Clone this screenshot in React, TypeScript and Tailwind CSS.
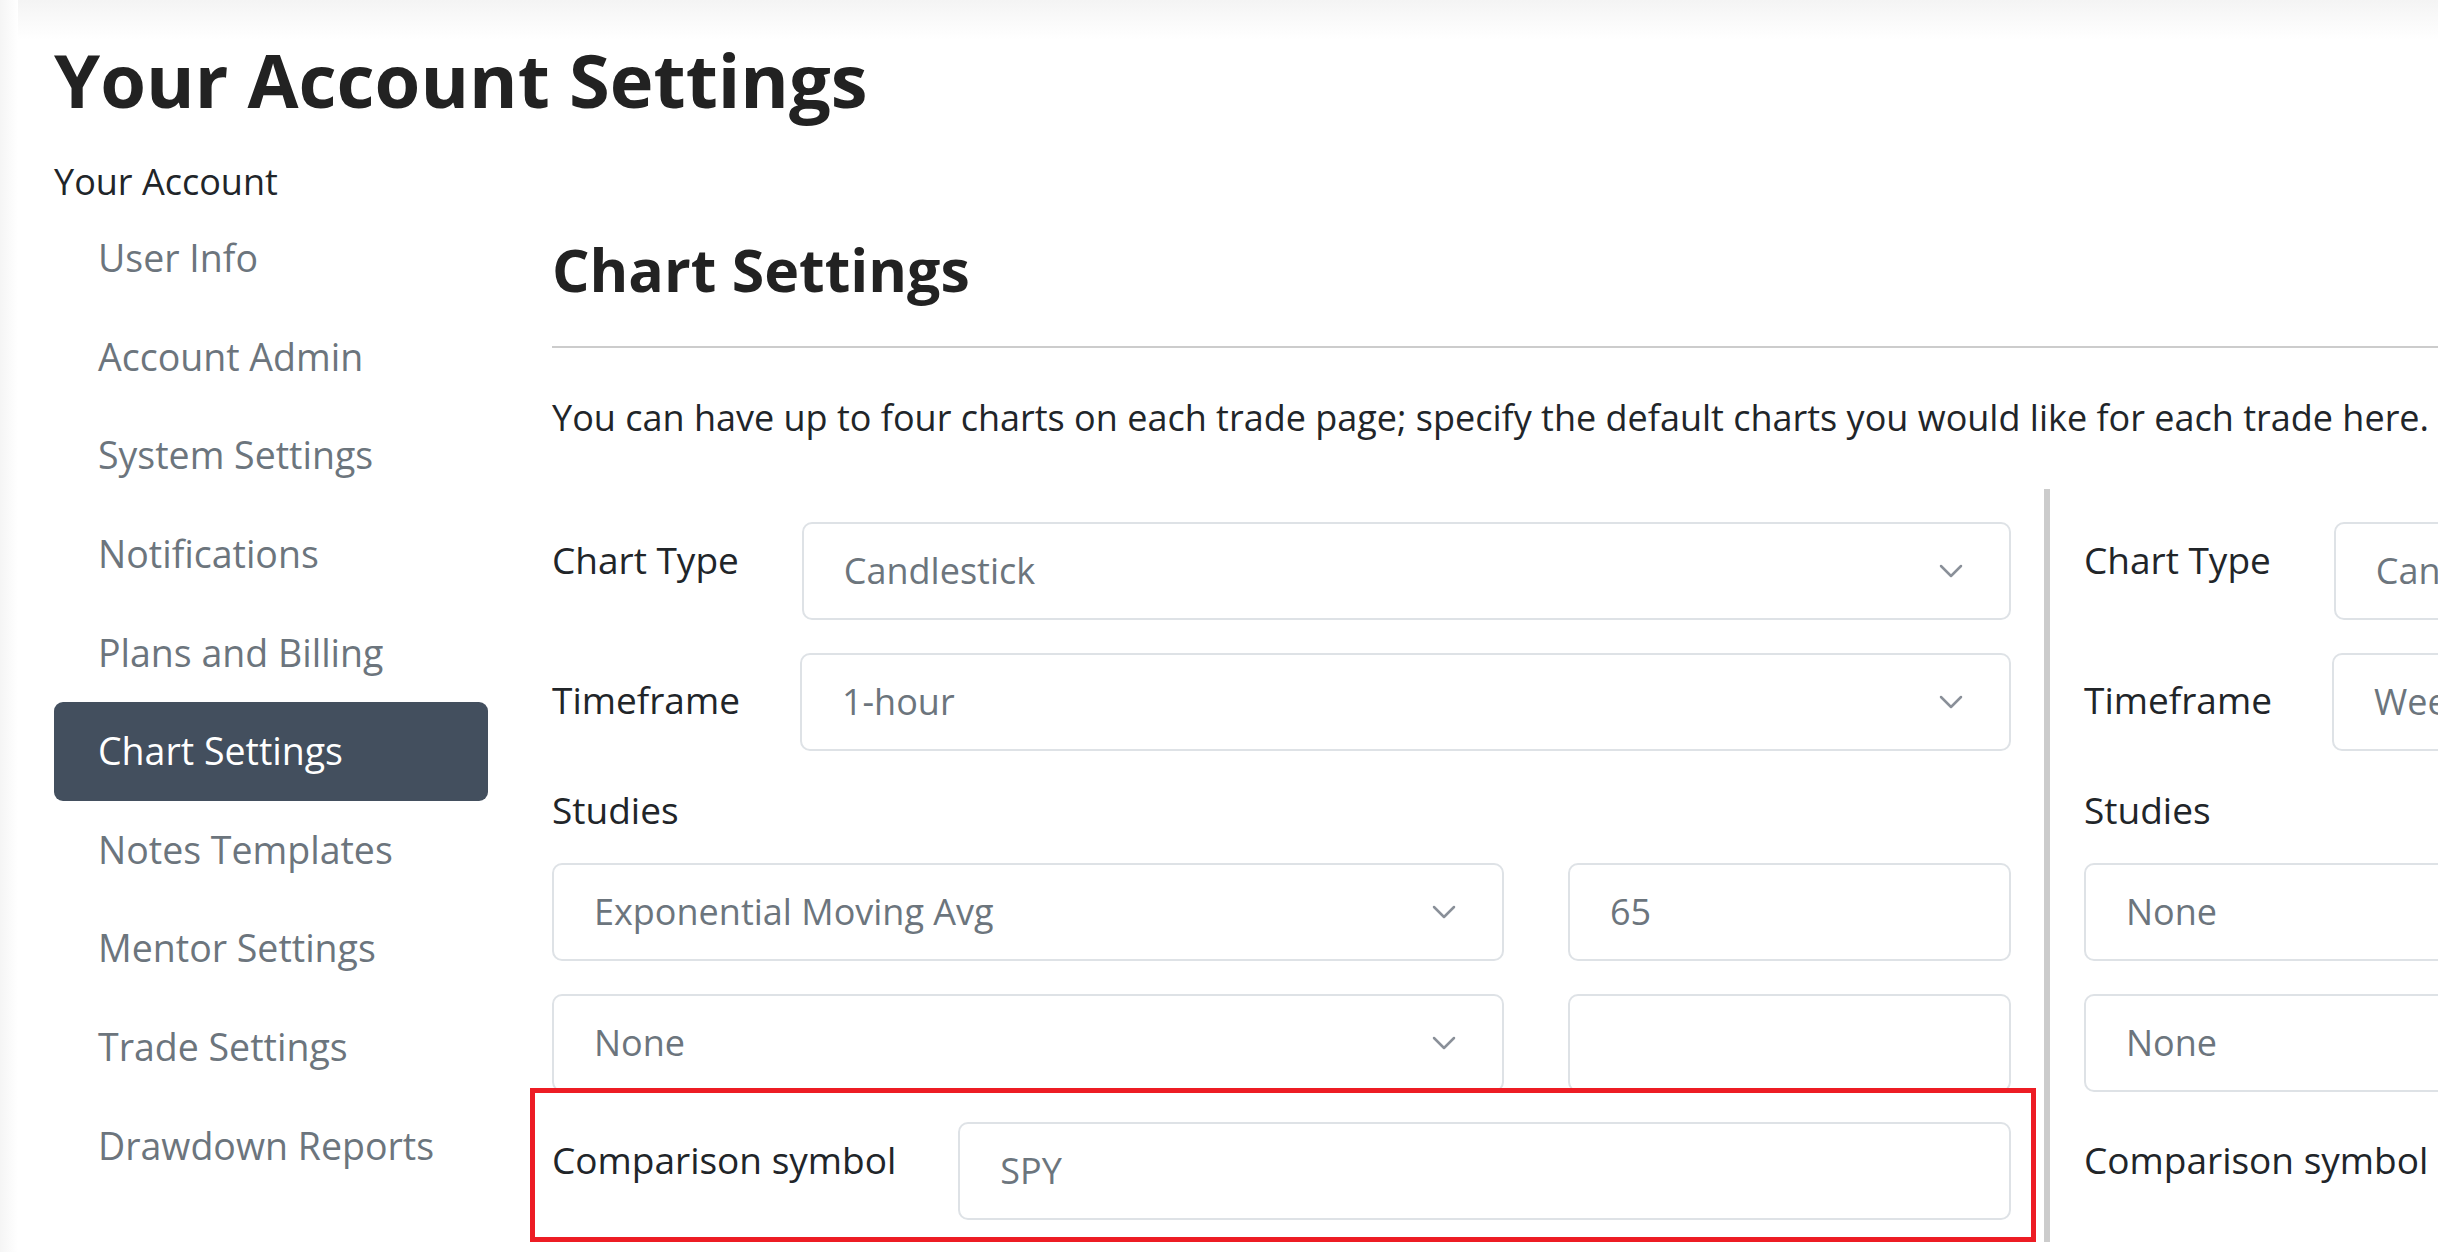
import React from 'react';

const navItems = [
  'User Info',
  'Account Admin',
  'System Settings',
  'Notifications',
  'Plans and Billing',
  'Chart Settings',
  'Notes Templates',
  'Mentor Settings',
  'Trade Settings',
  'Drawdown Reports',
];

function Chevron() {
  return (
    <svg width="24" height="14" viewBox="0 0 24 14" fill="none">
      <path d="M2 2l10 10L22 2" stroke="#8a9099" strokeWidth="2.5" strokeLinecap="round" strokeLinejoin="round" />
    </svg>
  );
}

function SelectBox({ value, className = '' }: { value: string; className?: string }) {
  return (
    <div
      className={`h-[98px] border-2 border-[#dee2e6] rounded-[10px] flex items-center justify-between pl-[40px] pr-[46px] text-[36px] text-[#6c757d] whitespace-nowrap overflow-hidden ${className}`}
    >
      <span>{value}</span>
      <Chevron />
    </div>
  );
}

function TextBox({ value, className = '' }: { value: string; className?: string }) {
  return (
    <div
      className={`h-[98px] border-2 border-[#dee2e6] rounded-[10px] flex items-center pl-[40px] text-[36px] text-[#6c757d] whitespace-nowrap overflow-hidden ${className}`}
    >
      {value}
    </div>
  );
}

function ChartColumn({
  chartType,
  timeframe,
  study1,
  study1Value,
  study2,
  symbol,
  highlight,
}: {
  chartType: string;
  timeframe: string;
  study1: string;
  study1Value: string;
  study2: string;
  symbol: string;
  highlight?: boolean;
}) {
  return (
    <div className="w-[1459px] shrink-0 pt-[42px]">
      {/* Chart type */}
      <div className="flex items-start gap-[63px]">
        <div className="text-[37px] text-[#212529] leading-[1.5] pt-[10px] whitespace-nowrap">Chart Type</div>
        <SelectBox value={chartType} className="flex-1" />
      </div>

      {/* Timeframe */}
      <div className="flex items-start gap-[60px] mt-[33px]">
        <div className="text-[37px] text-[#212529] leading-[1.5] pt-[19px] whitespace-nowrap">Timeframe</div>
        <SelectBox value={timeframe} className="flex-1" />
      </div>

      {/* Studies */}
      <div className="text-[37px] text-[#212529] leading-[1.5] mt-[31px]">Studies</div>
      <div className="grid grid-cols-[952px_1fr] gap-x-[64px] gap-y-[33px] mt-[25px]">
        <SelectBox value={study1} />
        <TextBox value={study1Value} />
        <SelectBox value={study2} />
        <TextBox value="" />
      </div>

      {/* Comparison symbol */}
      <div className="relative flex items-start gap-[62px] -mt-[4px] pt-[34px] pb-[22px]">
        <div className="text-[37px] text-[#212529] leading-[1.5] pt-[10px] whitespace-nowrap">Comparison symbol</div>
        <TextBox value={symbol} className="flex-1 border-[#c9cbd0]" />
        {highlight && (
          <div className="absolute top-0 bottom-0 -left-[22px] -right-[25px] border-[5px] border-[#ed1c24] pointer-events-none" />
        )}
      </div>
    </div>
  );
}

export default function App() {
  return (
    <div className="w-[2438px] h-[1252px] overflow-hidden bg-white font-['Open_Sans',sans-serif] relative">
      {/* faint top shading */}
      <div className="absolute top-0 left-0 right-0 h-[40px] bg-gradient-to-b from-[#f4f4f4] to-white pointer-events-none" />
      <div className="absolute top-0 bottom-0 left-0 w-[18px] bg-gradient-to-r from-[#f5f5f5] to-white pointer-events-none" />

      <div className="relative pl-[54px] pt-[35px]">
        <h1 className="text-[74px] font-bold text-[#222] leading-[89px] whitespace-nowrap">Your Account Settings</h1>

        <div className="flex mt-[32px]">
          {/* Left nav */}
          <div className="w-[434px] shrink-0">
            <div className="text-[36px] text-[#212529] leading-[52px]">Your Account</div>
            <nav className="flex flex-col mt-[1px]">
              {navItems.map((item) => {
                const active = item === 'Chart Settings';
                return (
                  <div
                    key={item}
                    className={`h-[98.6px] flex items-center pl-[44px] text-[37.5px] whitespace-nowrap rounded-[9px] ${
                      active ? 'bg-[#434f5e] text-white' : 'text-[#6c757d]'
                    }`}
                  >
                    {item}
                  </div>
                );
              })}
            </nav>
          </div>

          {/* Main */}
          <div className="ml-[64px] flex-1 min-w-0">
            <h2 className="text-[59px] font-bold text-[#222] leading-[70px] mt-[78px] whitespace-nowrap">Chart Settings</h2>
            <div className="border-t-2 border-[#cccccc] mt-[42px]" />
            <p className="text-[36px] text-[#212529] leading-[52px] mt-[44px] whitespace-nowrap">
              You can have up to four charts on each trade page; specify the default charts you would like for each trade here.
            </p>

            <div className="flex mt-[36px]">
              <ChartColumn
                chartType="Candlestick"
                timeframe="1-hour"
                study1="Exponential Moving Avg"
                study1Value="65"
                study2="None"
                symbol="SPY"
                highlight
              />
              <div className="w-[6px] shrink-0 bg-[#cccccc] ml-[33px] mr-[34px] mt-[9px]" />
              <ChartColumn
                chartType="Candlestick"
                timeframe="Weekly"
                study1="None"
                study1Value=""
                study2="None"
                symbol=""
              />
            </div>
          </div>
        </div>
      </div>
    </div>
  );
}
